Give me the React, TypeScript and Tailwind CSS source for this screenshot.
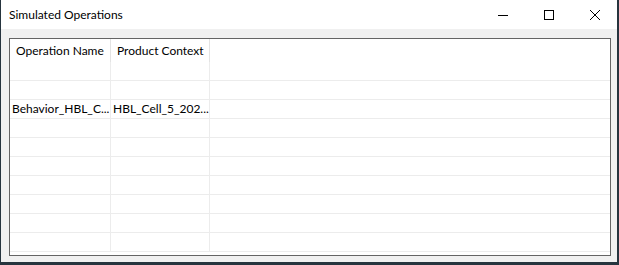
const rows = Array.from({ length: 10 });

function Cell({ w, text, header, last }: { w: string; text?: string; header?: boolean; last?: boolean }) {
  return (
    <div
      className={`${w} shrink-0 h-full flex items-center overflow-hidden whitespace-nowrap ${
        last ? "" : header ? "border-r border-[#e3e3e3]" : "border-r border-[#ececec]"
      } ${header ? "pl-[6px]" : "pl-[2px]"}`}
    >
      {text}
    </div>
  );
}

export default function App() {
  return (
    <div className="w-[619px] h-[265px] bg-[#26343e] flex overflow-hidden" style={{ fontFamily: 'Lato, "Noto Sans", sans-serif' }}>
      <div className="ml-[1px] w-[616px] h-[262px] bg-[#f0f0f0] flex flex-col">
        {/* Title bar */}
        <div className="h-[29px] bg-white flex items-center shrink-0 pt-[1px]">
          <span className="ml-[8px] text-[12px] text-black leading-none">Simulated Operations</span>
          <div className="ml-auto flex items-center h-full">
            <svg width="10" height="10" viewBox="0 0 10 10" className="mr-[36px]">
              <line x1="0" y1="5.5" x2="10" y2="5.5" stroke="#000" strokeWidth="1" />
            </svg>
            <svg width="10" height="10" viewBox="0 0 10 10" className="mr-[36px]">
              <rect x="0.5" y="0.5" width="9" height="9" fill="none" stroke="#000" strokeWidth="1" />
            </svg>
            <svg width="10" height="10" viewBox="0 0 10 10" className="mr-[17px]">
              <path d="M0 0 L10 10 M10 0 L0 10" stroke="#000" strokeWidth="1" />
            </svg>
          </div>
        </div>

        {/* Grid */}
        <div className="mt-[9px] ml-[8px] w-[602px] h-[218px] border border-[#646464] bg-white overflow-hidden text-[12px] text-black leading-none">
          <div className="h-[23px] flex">
            <Cell w="w-[101px]" text="Operation Name" header />
            <Cell w="w-[99px]" text="Product Context" header />
            <Cell w="flex-1" last />
          </div>
          {rows.map((_, i) => (
            <div key={i} className="h-[19px] flex border-b border-[#ececec]">
              <Cell w="w-[101px]" text={i === 2 ? "Behavior_HBL_C..." : undefined} />
              <Cell w="w-[99px]" text={i === 2 ? "HBL_Cell_5_202..." : undefined} />
              <Cell w="flex-1" last />
            </div>
          ))}
        </div>
      </div>
    </div>
  );
}
